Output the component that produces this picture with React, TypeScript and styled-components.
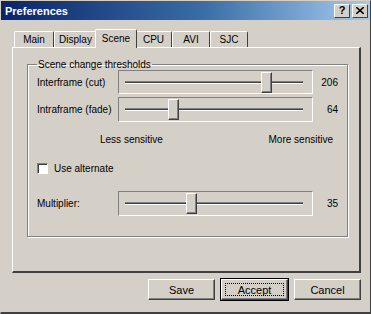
import React from "react";
import styled, { createGlobalStyle } from "styled-components";

const GlobalStyle = createGlobalStyle`
	body {
		margin: 0;
		background: #d4d0c8;
		font-family: "Liberation Sans", Arial, sans-serif;
		font-size: 10px;
		color: #000;
	}
`;

const Window = styled.div`
	width: 371px;
	height: 314px;
	box-sizing: border-box;
	background: #d4d0c8;
	border-top: 1px solid #d4d0c8;
	border-left: 1px solid #d4d0c8;
	border-right: 1px solid #404040;
	border-bottom: 2px solid #404040;
	display: flex;
	flex-direction: column;
	overflow: hidden;
`;

const TitleBar = styled.div`
	height: 19px;
	background: linear-gradient(to right, #0a246a, #3a6ea5 55%, #a6caf0);
	display: flex;
	align-items: center;
	padding: 0 2px 0 4px;
`;

const Title = styled.span`
	flex: 1;
	color: #fff;
	font-weight: bold;
	font-size: 11px;
`;

const CaptionButton = styled.div<{ gap?: number }>`
	width: 16px;
	height: 14px;
	box-sizing: border-box;
	background: #d4d0c8;
	border-top: 1px solid #fff;
	border-left: 1px solid #fff;
	border-right: 1px solid #404040;
	border-bottom: 1px solid #404040;
	margin-left: ${(p) => p.gap ?? 0}px;
	display: flex;
	align-items: center;
	justify-content: center;
	font-weight: bold;
	font-size: 11px;
	line-height: 1;
`;

const Body = styled.div`
	flex: 1;
	display: flex;
	flex-direction: column;
	padding: 8px 9px 0 11px;
`;

const TabStrip = styled.div`
	display: flex;
	align-items: flex-end;
	height: 19px;
	padding-left: 2px;
	position: relative;
	z-index: 1;
`;

const Tab = styled.div<{ active?: boolean; w: number }>`
	width: ${(p) => p.w}px;
	height: ${(p) => (p.active ? 19 : 16)}px;
	box-sizing: border-box;
	background: #d4d0c8;
	border-top: 1px solid #fff;
	border-left: 1px solid #fff;
	border-right: 1px solid #404040;
	border-radius: 2px 2px 0 0;
	margin: ${(p) => (p.active ? "0 -2px -1px -2px" : "0")};
	display: flex;
	align-items: ${(p) => (p.active ? "flex-start" : "center")};
	padding-top: ${(p) => (p.active ? "3px" : "0")};
	justify-content: center;
	position: relative;
	z-index: ${(p) => (p.active ? 2 : 1)};
`;

const Panel = styled.div`
	height: 226px;
	box-sizing: border-box;
	border-top: 1px solid #fff;
	border-left: 1px solid #fff;
	border-right: 2px solid #404040;
	border-bottom: 2px solid #404040;
	padding: 17px 0 0 14px;
`;

const GroupBox = styled.fieldset`
	margin: 0;
	width: 321px;
	height: 178px;
	box-sizing: border-box;
	border: 1px solid #808080;
	box-shadow: 1px 1px 0 #fff, inset 1px 1px 0 #fff;
	padding: 0 9px 0 9px;
	display: grid;
	grid-template-columns: 81px 195px 1fr;
	grid-template-rows: 24px 25px 20px 40px 25px;
	row-gap: 3px;
	align-items: center;
	position: relative;
	top: -6px;
`;

const Legend = styled.legend`
	padding: 0 1px;
	margin-left: 0;
`;

const Label = styled.span`
	white-space: nowrap;
`;

const Value = styled.span`
	text-align: right;
`;

const SliderBox = styled.div`
	height: 100%;
	box-sizing: border-box;
	border-top: 1px solid #808080;
	border-left: 1px solid #808080;
	border-right: 1px solid #fff;
	border-bottom: 1px solid #fff;
	display: flex;
	align-items: center;
	padding: 0 9px 0 6px;
`;

const Track = styled.div`
	flex: 1;
	height: 3px;
	box-sizing: border-box;
	border-top: 1px solid #808080;
	border-bottom: 1px solid #fff;
	background: #404040;
	position: relative;
`;

const Thumb = styled.div`
	position: absolute;
	top: -10px;
	width: 11px;
	height: 21px;
	margin-left: -5px;
	box-sizing: border-box;
	background: #d4d0c8;
	border-top: 1px solid #fff;
	border-left: 1px solid #fff;
	border-right: 1px solid #404040;
	border-bottom: 1px solid #404040;
	box-shadow: inset -1px -1px 0 #808080;
`;

const Hints = styled.div`
	grid-column: 1 / 4;
	display: flex;
	justify-content: space-between;
	padding: 0 5px 0 63px;
	align-self: end;
`;

const CheckRow = styled.label`
	grid-column: 1 / 4;
	display: flex;
	align-items: center;
	gap: 6px;
	align-self: center;
`;

const Box = styled.span`
	width: 11px;
	height: 11px;
	box-sizing: border-box;
	background: #fff;
	border-top: 1px solid #808080;
	border-left: 1px solid #808080;
	border-right: 1px solid #fff;
	border-bottom: 1px solid #fff;
	box-shadow: inset 1px 1px 0 #404040;
`;

const ButtonRow = styled.div`
	display: flex;
	justify-content: flex-end;
	gap: 6px;
	padding: 6px 0 0 0;
`;

const Button = styled.div<{ isDefault?: boolean }>`
	width: 67px;
	height: 21px;
	box-sizing: border-box;
	background: #d4d0c8;
	border-top: 1px solid #fff;
	border-left: 1px solid #fff;
	border-right: 1px solid #404040;
	border-bottom: 1px solid #404040;
	box-shadow: inset -1px -1px 0 #808080;
	outline: ${(p) => (p.isDefault ? "1px solid #000" : "none")};
	display: flex;
	align-items: center;
	justify-content: center;
	position: relative;
	font-size: 11px;
`;

const Focus = styled.span`
	position: absolute;
	inset: 3px;
	border: 1px dotted #000;
`;

const Slider = ({ pos }: { pos: number }) => (
	<SliderBox>
		<Track>
			<Thumb style={{ left: `${pos * 100}%` }} />
		</Track>
	</SliderBox>
);

const tabs = [
	{ name: "Main", w: 40 },
	{ name: "Display", w: 43 },
	{ name: "Scene", w: 42, active: true },
	{ name: "CPU", w: 37 },
	{ name: "AVI", w: 38 },
	{ name: "SJC", w: 38 },
];

const App = () => {
	return (
		<>
			<GlobalStyle />
			<Window>
				<TitleBar>
					<Title>Preferences</Title>
					<CaptionButton>?</CaptionButton>
					<CaptionButton gap={2}>
						<svg width="8" height="7" viewBox="0 0 8 7">
							<path d="M0 0 L8 7 M8 0 L0 7" stroke="#000" strokeWidth="1.6" />
						</svg>
					</CaptionButton>
				</TitleBar>
				<Body>
					<TabStrip>
						{tabs.map((t) => (
							<Tab key={t.name} w={t.w} active={t.active}>
								{t.name}
							</Tab>
						))}
					</TabStrip>
					<Panel>
						<GroupBox>
							<Legend>Scene change thresholds</Legend>
							<Label>Interframe (cut)</Label>
							<Slider pos={0.79} />
							<Value>206</Value>
							<Label>Intraframe (fade)</Label>
							<Slider pos={0.27} />
							<Value>64</Value>
							<Hints>
								<span>Less sensitive</span>
								<span>More sensitive</span>
							</Hints>
							<CheckRow>
								<Box />
								Use alternate
							</CheckRow>
							<Label>Multiplier:</Label>
							<Slider pos={0.37} />
							<Value>35</Value>
						</GroupBox>
					</Panel>
					<ButtonRow>
						<Button>Save</Button>
						<Button isDefault>
							<Focus />
							Accept
						</Button>
						<Button>Cancel</Button>
					</ButtonRow>
				</Body>
			</Window>
		</>
	);
};

export default App;
